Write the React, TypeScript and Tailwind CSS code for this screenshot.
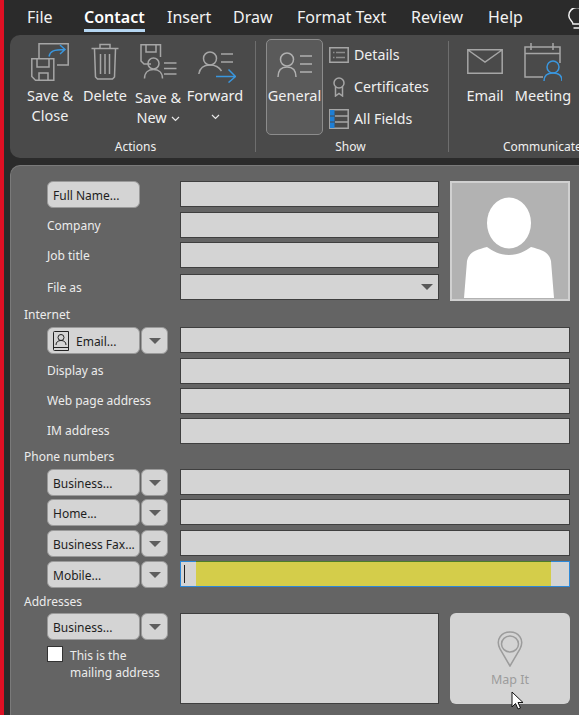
import React from 'react';

const Tab = ({ label, active, className }: { label: string; active?: boolean; className: string }) => (
  <div className={`relative shrink-0 text-[16px] leading-[22px] text-[#f2f2f2] ${active ? 'font-semibold text-white' : ''} ${className}`}>
    {label}
    {active && <span className="absolute left-0 right-0 top-[23px] h-[3px] bg-[#b5d6f2]" />}
  </div>
);

const SaveCloseIcon = () => (
  <svg width="38" height="38" viewBox="0 0 38 38" fill="none" stroke="#a6a6a6" strokeWidth="1.5">
    <path d="M8 15V.800h29.200V22H26" />
    <path d="M.8 15.800h22V37.200H4.500L.8 33.500z" fill="#4a4a4a" />
    <path d="M6 16v8h12v-8M8 37v-7h9v7" />
    <path d="M18 13.500c1-5 4-7 16-7M29 2l5 4.500-5 4.500" stroke="#3a96dd" />
  </svg>
);

const DeleteIcon = () => (
  <svg width="28" height="37" viewBox="0 0 28 37" fill="none" stroke="#a6a6a6" strokeWidth="1.500">
    <path d="M.5 5.500h27M9 5V1.500h10V5M3.500 6l1 28 2 2h15l2-2 1-28M9.500 11v20M14 11v20M18.500 11v20" />
  </svg>
);

const SaveNewIcon = () => (
  <svg width="37" height="35" viewBox="0 0 37 35" fill="none" stroke="#a6a6a6" strokeWidth="1.500">
    <path d="M11 20H4l-3-3V.800h19.500V13" />
    <path d="M6 1v7h10V1" />
    <circle cx="13.500" cy="19.500" r="5.500" />
    <path d="M4.500 34.500c0-6 4-9 9-9s9 3 9 9M24 19h12.500M24 24.500h12.500M24 30h12.500" />
  </svg>
);

const ForwardIcon = () => (
  <svg width="38" height="32" viewBox="0 0 38 32" fill="none" stroke="#a6a6a6" strokeWidth="1.500">
    <circle cx="12" cy="7.500" r="6.500" />
    <path d="M.8 23c1-6 5-9 11.200-9 5 0 9 2 11.500 6M23 3h12M23 11h12" />
    <path d="M18 25.500h19M30.500 18.500l7 7-7 6" stroke="#3a96dd" />
  </svg>
);

const GeneralIcon = () => (
  <svg width="36" height="26" viewBox="0 0 36 26" fill="none" stroke="#b0b0b0" strokeWidth="1.500">
    <circle cx="10" cy="7.500" r="6.500" />
    <path d="M1 25c0-7 4-10 9-10s9 3 9 10M23 4h12M23 12h12M23 20h12" />
  </svg>
);

const DetailsIcon = () => (
  <svg width="20" height="16" viewBox="0 0 20 16" fill="none" stroke="#a6a6a6">
    <path d="M.8.800h18.400v14.400H.8z" strokeWidth="1.500" />
    <path d="M4 5.500h1.500M7 5.500h9M4 10.500h1.500M7 10.500h9" strokeWidth="1.500" stroke="#8c8c8c" />
  </svg>
);

const CertificatesIcon = () => (
  <svg width="12" height="20" viewBox="0 0 12 20" fill="none" stroke="#a6a6a6" strokeWidth="1.500">
    <circle cx="6" cy="6" r="5" />
    <path d="M2.500 10v9L6 16.500 9.500 19v-9" />
  </svg>
);

const AllFieldsIcon = () => (
  <svg width="20" height="20" viewBox="0 0 20 20" fill="none">
    <path d="M.8.800h18.400v18.400H.8zM6 7h13.500M6 13h13.500" stroke="#a6a6a6" strokeWidth="1.500" />
    <path d="M1 1h4.500v18H1z" fill="#1e7fd6" />
    <path d="M1 7h4.500M1 13h4.500" stroke="#4a4a4a" />
  </svg>
);

const EmailIcon = () => (
  <svg width="36" height="25" viewBox="0 0 36 25" fill="none" stroke="#a6a6a6" strokeWidth="1.500">
    <path d="M.8.800h34.400v23.400H.8zM1 1l17 12L35 1" />
  </svg>
);

const MeetingIcon = () => (
  <svg width="38" height="38" viewBox="0 0 38 38" fill="none" stroke="#a6a6a6" strokeWidth="1.500">
    <path d="M19 34H1V4h35v16M1 10.500h35M7 0v7M29 0v7" />
    <circle cx="29" cy="24" r="6" stroke="#3a96dd" />
    <path d="M20 38c0-6 4-8 9-8s9 2 9 8" stroke="#3a96dd" />
  </svg>
);

const Chevron = () => (
  <svg width="9" height="6" viewBox="0 0 9 6" fill="none" stroke="#e8e8e8" strokeWidth="1.200" className="inline-block">
    <path d="M1 1l3.500 3.500L8 1" />
  </svg>
);

const RibbonButton = ({ icon, lines, width, textClass = 'mt-px' }: { icon: React.ReactNode; lines: React.ReactNode[]; width: string; textClass?: string }) => (
  <div className={`flex flex-col items-center shrink-0 ${width}`}>
    <div className="h-[45px] shrink-0 flex items-center justify-center">{icon}</div>
    <div className={`text-[14.500px] leading-[20px] text-[#f0f0f0] text-center whitespace-nowrap ${textClass}`}>
      {lines.map((l, i) => (
        <div key={i}>{l}</div>
      ))}
    </div>
  </div>
);

const ShowRow = ({ icon, label }: { icon: React.ReactNode; label: string }) => (
  <div className="flex items-center h-[32px]">
    <div className="w-[20px] flex justify-center">{icon}</div>
    <span className="ml-[5px] text-[14.200px] text-[#f0f0f0] whitespace-nowrap">{label}</span>
  </div>
);

const ContactCardIcon = () => (
  <svg width="16" height="20" viewBox="0 0 16 20" fill="none" stroke="#222" strokeWidth="1">
    <path d="M1.500.500h14v19h-14a1 1 0 0 1-1-1V1.500a1 1 0 0 1 1-1zM.500 16.500h15" />
    <circle cx="8" cy="6.500" r="3" />
    <path d="M3 14c0-3 2-4.500 5-4.500s5 1.500 5 4.500" />
  </svg>
);

const FieldButton = ({ label, icon }: { label: string; icon?: React.ReactNode }) => (
  <div className="w-[93px] h-[27px] rounded-[6px] bg-[#d4d4d4] border border-[#9a9a9a] flex items-center pl-[5px] pt-[2px] text-[12px] text-[#1e1e1e] whitespace-nowrap overflow-hidden shrink-0">
    {icon && <span className="mr-[7px] flex -mt-[2px]">{icon}</span>}
    {label}
  </div>
);

const DropButton = () => (
  <div className="ml-px w-[27px] h-[27px] rounded-[6px] bg-[#d4d4d4] border border-[#9a9a9a] flex items-center justify-center shrink-0">
    <span className="w-0 h-0 border-x-[6px] border-x-transparent border-t-[6px] border-t-[#5e5e5e]" />
  </div>
);

const Input = ({ className = 'h-[26px]', border = 'border-[#3f3f3f]', children }: { className?: string; border?: string; children?: React.ReactNode }) => (
  <div className={`flex-1 bg-[#d4d4d4] border relative ${border} ${className}`}>{children}</div>
);

const Row = ({ left, top, input }: { left: React.ReactNode; top: string; input?: React.ReactNode }) => (
  <div className={`flex items-start ${top}`}>
    <div className="w-[133px] flex shrink-0 items-start h-[26px]">{left}</div>
    {input ?? <Input />}
  </div>
);

const Label = ({ children, tight }: { children: React.ReactNode; tight?: boolean }) => (
  <span className={`text-[12px] text-[#ececec] whitespace-nowrap ${tight ? 'leading-[26px]' : 'leading-[28px]'}`}>{children}</span>
);

const Heading = ({ children, top }: { children: React.ReactNode; top: string }) => (
  <div className={`-ml-[23px] text-[12px] leading-[16px] text-[#ececec] ${top}`}>{children}</div>
);

export default function App() {
  return (
    <div
      className="relative w-[579px] h-[715px] overflow-hidden flex bg-[#2b2b2b]"
      style={{ fontFamily: '"Noto Sans", "Open Sans", sans-serif' }}
    >
      <div className="w-[4px] bg-[#e01024] shrink-0" />
      <div className="flex-1 min-w-0 pl-[6px]">
        {/* Tabs */}
        <div className="h-[35px] flex pt-[6px] whitespace-nowrap relative">
          <Tab label="File" className="ml-[17px] w-[57px]" />
          <Tab label="Contact" active className="w-[61px]" />
          <Tab label="Insert" className="ml-[22px] w-[66px]" />
          <Tab label="Draw" className="w-[64px]" />
          <Tab label="Format Text" className="w-[114px]" />
          <Tab label="Review" className="w-[77px]" />
          <Tab label="Help" className="w-[80px]" />
          <svg width="18" height="22" viewBox="0 0 18 22" fill="none" stroke="#f0f0f0" strokeWidth="1.500" className="mt-[2px] shrink-0">
            <path d="M5 16c0-3-4.200-4-4.200-8.500a8 8 0 0 1 16 0c0 4.500-4.200 5.500-4.200 8.500zM5.500 20h7" />
          </svg>
        </div>

        {/* Ribbon */}
        <div className="w-[580px] h-[123px] bg-[#4a4a4a] rounded-l-[10px] flex text-[#f0f0f0]">
          <div className="w-[246px] shrink-0 border-r border-[#6e6e6e] my-[6px] flex flex-col">
            <div className="flex h-[96px] shrink-0 -mt-[2px] pl-[12px]">
              <RibbonButton width="w-[56px]" icon={<SaveCloseIcon />} lines={['Save &', 'Close']} />
              <RibbonButton width="w-[54px]" icon={<DeleteIcon />} lines={['Delete']} />
              <RibbonButton width="w-[52px]" textClass="mt-[3px]" icon={<SaveNewIcon />} lines={['Save &', <>New <Chevron /></>]} />
              <RibbonButton width="w-[62px]" icon={<div className="ml-[3px] mt-[10px] flex"><ForwardIcon /></div>} lines={['Forward', <Chevron />]} />
            </div>
            <div className="mt-[4px] text-[12px] text-center leading-[16px] pl-[6px]">Actions</div>
          </div>

          <div className="w-[193px] shrink-0 border-r border-[#6e6e6e] my-[6px] flex flex-col">
            <div className="flex h-[96px] shrink-0 -mt-[2px] pl-[10px]">
              <div className="w-[57px] h-[96px] rounded-[5px] border border-[#8c8c8c] bg-[#5a5a5a] flex flex-col items-center pt-[12px] text-[14.500px]">
                <GeneralIcon />
                <span className="mt-[7px]">General</span>
              </div>
              <div className="ml-[6px] flex flex-col">
                <ShowRow icon={<DetailsIcon />} label="Details" />
                <ShowRow icon={<CertificatesIcon />} label="Certificates" />
                <ShowRow icon={<AllFieldsIcon />} label="All Fields" />
              </div>
            </div>
            <div className="mt-[4px] text-[12px] text-center leading-[16px] pr-[3px]">Show</div>
          </div>

          <div className="flex-1 min-w-0 my-[6px] flex flex-col">
            <div className="flex h-[96px] shrink-0 -mt-[2px] pl-[7px]">
              <RibbonButton width="w-[58px]" icon={<EmailIcon />} lines={['Email']} />
              <RibbonButton width="w-[58px]" icon={<MeetingIcon />} lines={['Meeting']} />
            </div>
            <div className="mt-[4px] text-[12px] leading-[16px] pl-[54px] whitespace-nowrap">Communicate</div>
          </div>
        </div>

        {/* Form */}
        <div className="mt-[7px] w-[580px] h-[560px] bg-[#646464] rounded-tl-[10px] border-t border-l border-[#7a7a7a] pl-[36px] pr-[10px] pt-[15px]">
          <div className="w-[523px]">
            <div className="flex">
              <div className="w-[392px] shrink-0">
                <Row top="" left={<FieldButton label="Full Name..." />} />
                <Row top="mt-[5px]" left={<Label>Company</Label>} />
                <Row top="mt-[4px]" left={<Label>Job title</Label>} />
                <Row
                  top="mt-[6px]"
                  left={<Label>File as</Label>}
                  input={
                    <Input className="h-[26px] flex items-center justify-end pr-[5px]">
                      <span className="w-0 h-0 border-x-[6px] border-x-transparent border-t-[6px] border-t-[#595959]" />
                    </Input>
                  }
                />
              </div>
              <div className="ml-[11px] w-[120px] h-[120px] bg-[#b2b2b2] border-2 border-[#d0d0d0] flex items-end justify-center">
                <svg width="92" height="102" viewBox="0 0 92 102" fill="#fff">
                  <ellipse cx="45" cy="26" rx="22" ry="25.500" />
                  <path d="M0 101l3-37c2-9 9-11 20-14 6 4 12 8 22 8s16-4 22-8c11 3 18 5 20 14l3 37z" />
                </svg>
              </div>
            </div>

            <Heading top="mt-[6px]">Internet</Heading>
            <Row top="mt-[4px]" left={<><FieldButton label="Email..." icon={<ContactCardIcon />} /><DropButton /></>} />
            <Row top="mt-[5px]" left={<Label tight>Display as</Label>} />
            <Row top="mt-[4px]" left={<Label tight>Web page address</Label>} />
            <Row top="mt-[4px]" left={<Label tight>IM address</Label>} />

            <Heading top="mt-[5px]">Phone numbers</Heading>
            <Row top="mt-[4px]" left={<><FieldButton label="Business..." /><DropButton /></>} />
            <Row top="mt-[4px]" left={<><FieldButton label="Home..." /><DropButton /></>} />
            <Row top="mt-[5px]" left={<><FieldButton label="Business Fax..." /><DropButton /></>} />
            <Row
              top="mt-[5px]"
              left={<><FieldButton label="Mobile..." /><DropButton /></>}
              input={
                <Input className="h-[26px] pl-[15px] pr-[18px]" border="border-[#2b88d8]">
                  <span className="absolute left-[3px] top-[3px] w-px h-[18px] bg-[#222]" />
                  <div className="-mt-px h-[25px] bg-[#d4cd4a] border-t border-[#4d7d2a]" />
                </Input>
              }
            />

            <Heading top="mt-[7px]">Addresses</Heading>
            <div className="mt-[3px] flex">
              <div className="w-[133px] shrink-0">
                <div className="flex">
                  <FieldButton label="Business..." />
                  <DropButton />
                </div>
                <div className="mt-[6px] flex items-start">
                  <div className="w-[16px] h-[16px] bg-white border border-[#333] shrink-0" />
                  <div className="ml-[7px] pt-px text-[12px] leading-[17px] text-[#ececec] whitespace-nowrap">
                    This is the
                    <br />
                    mailing address
                  </div>
                </div>
              </div>
              <Input className="h-[91px]" />
              <div className="ml-[11px] w-[120px] h-[91px] bg-[#d4d4d4] rounded-[6px] flex flex-col items-center pt-[18px] shrink-0">
                <svg width="26" height="36" viewBox="0 0 26 36" fill="none" stroke="#9c9c9c" strokeWidth="1.500">
                  <path d="M13 35L3 18C-2 8 5 1 13 1s15 7 10 17z" />
                  <ellipse cx="13" cy="13" rx="8.500" ry="8" />
                </svg>
                <span className="mt-[4px] text-[12.500px] text-[#9c9c9c]">Map It</span>
              </div>
            </div>
          </div>
        </div>
      </div>

      {/* Mouse pointer */}
      <svg width="14" height="20" viewBox="0 0 14 20" className="absolute left-[511px] top-[691px]">
        <path d="M1 1v15l3.500-3.500L7 18l2.500-1L7 11.500h5z" fill="#fff" stroke="#111" strokeWidth="1" />
      </svg>
    </div>
  );
}
